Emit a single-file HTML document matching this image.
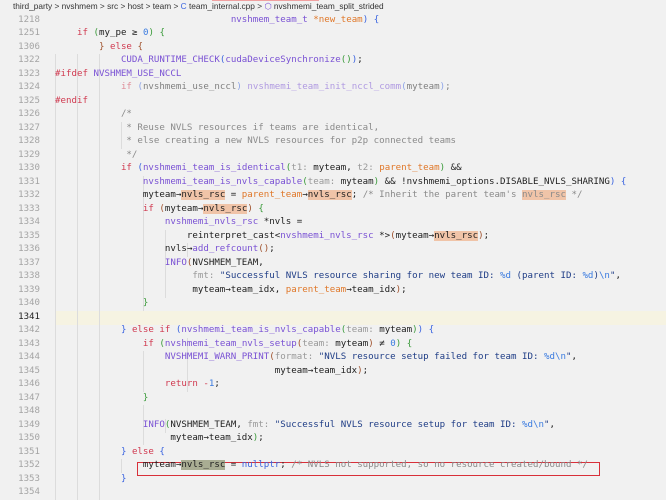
<!DOCTYPE html>
<html><head><meta charset="utf-8"><style>
body{margin:0;width:666px;height:500px;background:#f1f1f1;overflow:hidden;position:relative;font-family:"DejaVu Sans Mono","Liberation Mono",monospace;}
.bc{position:absolute;left:13px;top:1px;font:8.3px "Liberation Sans",sans-serif;color:#333;white-space:pre;}
.ln{position:absolute;left:0;width:40px;text-align:right;font-size:9.1px;color:#a4a4a4;line-height:13.5px;}
.ln.cur{color:#222;}
.c{position:absolute;left:55px;font-size:9.13px;line-height:13.5px;white-space:pre;color:#1e1e1e;}
.g{position:absolute;width:1px;background:#dcdcdc;}
.k{color:#d03a50}.f{color:#7a52d4}.o{color:#e0782a}.b{color:#3a64e0}.gr{color:#3a9a3a}.br{color:#a0522d}
.cm{color:#8a8a8a}.s{color:#1f3d86}.e{color:#3a7be0}.h{color:#9a9a9a}.hl{background:#f0c4a8}.hg{background:#a9ad93}.in{color:#999}.n{color:#3a7be0}
</style></head><body>
<div class="bc">third_party &gt; nvshmem &gt; src &gt; host &gt; team &gt; <span style="color:#3a64e0">C</span> team_internal.cpp &gt; <span style="color:#7a52d4">⬡</span> nvshmemi_team_split_strided</div>
<div style="position:absolute;left:212px;top:0;width:107px;height:1px;background:#f0a0a0"></div>
<div style="position:absolute;left:55px;top:311px;width:611px;height:13.5px;background:#f6f3e2"></div>
<div class="g" style="left:55px;top:54px;height:446px"></div>
<div class="g" style="left:77px;top:54px;height:446px"></div>
<div class="g" style="left:99px;top:54px;height:446px"></div>
<div class="g" style="left:121px;top:122px;height:27px"></div>
<div class="g" style="left:143px;top:176px;height:135px"></div>
<div class="g" style="left:165px;top:230px;height:68px"></div>
<div class="g" style="left:187px;top:243px;height:14px"></div>
<div class="g" style="left:187px;top:338px;height:54px"></div>
<div class="g" style="left:143px;top:351px;height:41px"></div>
<div class="g" style="left:143px;top:405px;height:40px"></div>
<div class="g" style="left:165px;top:419px;height:14px"></div>
<div class="g" style="left:121px;top:459px;height:14px"></div>
<div style="position:absolute;left:137px;top:462px;width:463px;height:14px;border:1px solid #d8303a;box-sizing:border-box"></div>
<div id="L"></div>
<script>
const nums=[1218,1251,1306,1322,1323,1324,1325,1326,1327,1328,1329,1330,1331,1332,1333,1334,1335,1336,1337,1338,1339,1340,1341,1342,1343,1344,1345,1346,1347,1348,1349,1350,1351,1352,1353,1354];
const A='→';
const lines=[
' '.repeat(32)+'<span class="f">nvshmem_team_t</span> <span class="o">*new_team</span><span class="b">)</span> <span class="b">{</span>',
'    <span class="k">if</span> <span class="gr">(</span>my_pe ≥ <span class="n">0</span><span class="gr">)</span> <span class="gr">{</span>',
'        <span class="br">}</span> <span class="k">else</span> <span class="br">{</span>',
'            <span class="f">CUDA_RUNTIME_CHECK</span><span class="b">(</span><span class="f">cudaDeviceSynchronize</span><span class="gr">()</span><span class="b">)</span>;',
'<span class="k">#ifdef</span> <span class="f">NVSHMEM_USE_NCCL</span>',
'            <span style="opacity:.55"><span class="k">if</span> <span class="b">(</span>nvshmemi_use_nccl<span class="b">)</span> <span class="f">nvshmemi_team_init_nccl_comm</span><span class="b">(</span>myteam<span class="b">)</span>;</span>',
'<span class="k">#endif</span>',
'            <span class="cm">/*</span>',
'            <span class="cm"> * Reuse NVLS resources if teams are identical,</span>',
'            <span class="cm"> * else creating a new NVLS resources for p2p connected teams</span>',
'            <span class="cm"> */</span>',
'            <span class="k">if</span> <span class="b">(</span><span class="f">nvshmemi_team_is_identical</span><span class="gr">(</span><span class="in">t1:</span> myteam, <span class="in">t2:</span> <span class="o">parent_team</span><span class="gr">)</span> &amp;&amp;',
'                <span class="f">nvshmemi_team_is_nvls_capable</span><span class="gr">(</span><span class="in">team:</span> myteam<span class="gr">)</span> &amp;&amp; !nvshmemi_options.DISABLE_NVLS_SHARING<span class="b">)</span> <span class="b">{</span>',
'                myteam'+A+'<span class="hl">nvls_rsc</span> = <span class="o">parent_team</span>'+A+'<span class="hl">nvls_rsc</span>; <span class="cm">/* Inherit the parent team\'s <span class="hl">nvls_rsc</span> */</span>',
'                <span class="k">if</span> <span class="br">(</span>myteam'+A+'<span class="hl">nvls_rsc</span><span class="br">)</span> <span class="gr">{</span>',
'                    <span class="f">nvshmemi_nvls_rsc</span> *nvls =',
'                        reinterpret_cast&lt;<span class="f">nvshmemi_nvls_rsc</span> *&gt;<span class="br">(</span>myteam'+A+'<span class="hl">nvls_rsc</span><span class="br">)</span>;',
'                    nvls'+A+'<span class="f">add_refcount</span><span class="br">()</span>;',
'                    <span class="f">INFO</span><span class="br">(</span>NVSHMEM_TEAM,',
'                         <span class="in">fmt:</span> <span class="s">"Successful NVLS resource sharing for new team ID: <span class="e">%d</span> (parent ID: <span class="e">%d</span>)<span class="e">\\n</span>"</span>,',
'                         myteam'+A+'team_idx, <span class="o">parent_team</span>'+A+'team_idx<span class="br">)</span>;',
'                <span class="gr">}</span>',
'',
'            <span class="b">}</span> <span class="k">else if</span> <span class="b">(</span><span class="f">nvshmemi_team_is_nvls_capable</span><span class="gr">(</span><span class="in">team:</span> myteam<span class="gr">)</span><span class="b">)</span> <span class="b">{</span>',
'                <span class="k">if</span> <span class="gr">(</span><span class="f">nvshmemi_team_nvls_setup</span><span class="br">(</span><span class="in">team:</span> myteam<span class="br">)</span> ≠ <span class="n">0</span><span class="gr">)</span> <span class="gr">{</span>',
'                    <span class="f">NVSHMEMI_WARN_PRINT</span><span class="br">(</span><span class="in">format:</span> <span class="s">"NVLS resource setup failed for team ID: <span class="e">%d\\n</span>"</span>,',
'                                        myteam'+A+'team_idx<span class="br">)</span>;',
'                    <span class="k">return</span> <span class="k">-</span><span class="n">1</span>;',
'                <span class="gr">}</span>',
'',
'                <span class="f">INFO</span><span class="gr">(</span>NVSHMEM_TEAM, <span class="in">fmt:</span> <span class="s">"Successful NVLS resource setup for team ID: <span class="e">%d\\n</span>"</span>,',
'                     myteam'+A+'team_idx<span class="gr">)</span>;',
'            <span class="b">}</span> <span class="k">else</span> <span class="b">{</span>',
'                myteam'+A+'<span class="hg">nvls_rsc</span> = <span class="b">nullptr</span>; <span class="cm">/* NVLS not supported, so no resource created/bound */</span>',
'            <span class="b">}</span>',
''];
let h='';
for(let i=0;i<nums.length;i++){const t=13.5+i*13.5;
h+='<div class="ln'+(nums[i]==1341?' cur':'')+'" style="top:'+t+'px">'+nums[i]+'</div>';
h+='<div class="c" style="top:'+t+'px">'+lines[i]+'</div>';}
document.getElementById('L').innerHTML=h;
</script>
</body></html>
